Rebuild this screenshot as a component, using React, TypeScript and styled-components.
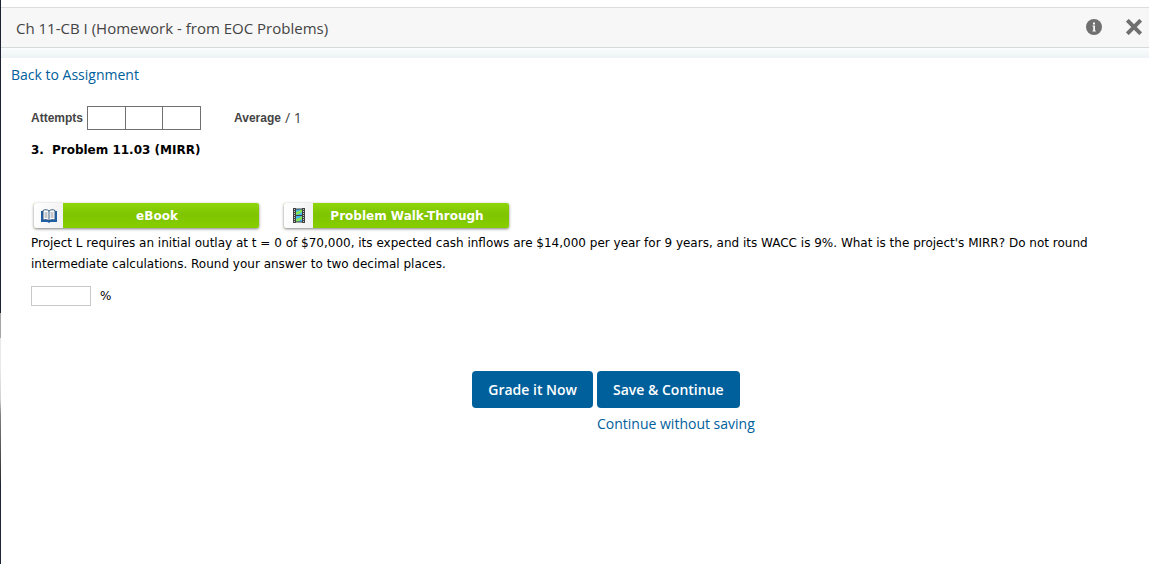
import React from "react";
import styled, { createGlobalStyle } from "styled-components";

const openSans = `"Open Sans", "Noto Sans", sans-serif`;
const verdana = `Verdana, "DejaVu Sans", sans-serif`;
const helvetica = `"Liberation Sans", Helvetica, Arial, sans-serif`;

const GlobalStyle = createGlobalStyle`
  *, *::before, *::after { box-sizing: border-box; }
  body { margin: 0; background: #fff; color: #000; font-family: ${openSans}; font-size: 14px; }
`;

const Shell = styled.div`
  display: flex;
  min-height: 100vh;
`;

const Edge = styled.div`
  flex: 0 0 1px;
  background: linear-gradient(#1d2130 0 313px, #a5a5a5 313px 338px, #e8e8e8 338px 370px, #d0d0d0 400px, #808080 415px, #303030 480px, #1d2536 484px);
`;

const Page = styled.div`
  flex: 1;
  min-width: 0;
  padding-top: 7px;
`;

const Header = styled.header`
  display: flex;
  align-items: center;
  justify-content: space-between;
  height: 41px;
  padding: 0 7px 0 15px;
  background: #f7f7f7;
  border-top: 1px solid #dcdcdc;
  border-bottom: 1px solid #d5dadb;
`;

const Title = styled.h1`
  margin: 0;
  font-size: 15px;
  font-weight: 400;
  line-height: 20px;
  color: #444;
`;

const HeaderActions = styled.div`
  display: flex;
  align-items: center;
  gap: 24px;
  padding-bottom: 1px;
`;

const IconButton = styled.button`
  display: block;
  padding: 0;
  border: 0;
  background: none;
  cursor: pointer;
  svg { display: block; }
`;

const HeaderShade = styled.div`
  height: 10px;
  background: linear-gradient(#fafdfe, #edf3f5);
`;

const Link = styled.a`
  color: #00609c;
  font-size: 14px;
  line-height: 20px;
  text-decoration: none;
`;

const BackRow = styled.nav`
  display: flex;
  padding: 7px 10px 0;
`;

const Main = styled.main`
  padding: 21px 30px 0;
  font-family: ${verdana};
  font-size: 12px;
`;

const Score = styled.div`
  display: flex;
  align-items: center;
  color: #444;
`;

const ScoreLabel = styled.span`
  font-family: ${helvetica};
  font-size: 12px;
  font-weight: 700;
`;

const ScoreValue = styled.span`
  margin-left: 4px;
  font-family: ${openSans};
  font-size: 14px;
  line-height: 20px;
`;

const Attempts = styled.table`
  width: 114px;
  margin: 0 33px 0 4px;
  table-layout: fixed;
  border-collapse: collapse;
  td { height: 23px; padding: 0; border: 1px solid #707070; }
`;

const ProblemTitle = styled.h2`
  display: flex;
  gap: 8px;
  margin: 12px 0 0;
  font-size: 12px;
  font-weight: 700;
  line-height: 16px;
`;

const Resources = styled.div`
  display: flex;
  gap: 25px;
  margin: 45px 0 5px;
  padding-left: 3px;
`;

const ResourceButton = styled.button`
  display: flex;
  width: 225px;
  height: 25px;
  padding: 0;
  overflow: hidden;
  border: 0;
  border-radius: 2px;
  background: linear-gradient(#8fd60c, #7fc400 45%, #86ce00);
  box-shadow: 0 1px 3px rgba(0, 0, 0, 0.5);
  color: #fff;
  font-family: ${verdana};
  font-size: 12px;
  font-weight: 700;
  line-height: 27px;
  cursor: pointer;
`;

const ResourceIcon = styled.span`
  display: flex;
  align-items: center;
  justify-content: center;
  width: 29px;
  height: 25px;
  background: linear-gradient(100deg, #fff, #f1f1f1);
`;

const ResourceLabel = styled.span`
  flex: 1;
  padding-right: 8px;
  text-align: center;
`;

const Question = styled.p`
  margin: 0;
  line-height: 21px;
`;

const Answer = styled.label`
  display: flex;
  align-items: center;
  gap: 9px;
  margin-top: 11px;
`;

const AnswerInput = styled.input`
  width: 60px;
  height: 20px;
  padding: 0 4px;
  border: 1px solid #c8c8c8;
  border-radius: 0;
  background: #fff;
  font: inherit;
`;

const Submit = styled.div`
  display: grid;
  grid-template-columns: 1fr 1fr;
  gap: 6px 4px;
  padding: 65px 0 20px 40px;
  justify-items: start;
`;

const SubmitButton = styled.button<{ $end?: boolean }>`
  height: 37px;
  padding: 0 16px;
  border: 0;
  border-radius: 4px;
  background: #00609c;
  color: #fff;
  font-family: ${openSans};
  font-size: 14px;
  font-weight: 600;
  justify-self: ${(p) => (p.$end ? "end" : "start")};
  cursor: pointer;
`;

const SkipLink = styled(Link)`
  grid-column: 2;
  font-family: ${openSans};
`;

const InfoIcon = () => (
  <svg width="16" height="16" viewBox="0 0 16 16" aria-hidden="true">
    <circle cx="8" cy="8" r="8" fill="#707070" />
    <path d="M7 3.500h2v2H7zM6.500 6.500H9v5h.8v1H6.500v-1h.7v-4h-.7z" fill="#f7f7f7" />
  </svg>
);

const CloseIcon = () => (
  <svg width="16" height="16" viewBox="0 0 16 16" aria-hidden="true">
    <path d="M2.700 2.700l10.600 10.600M13.300 2.700l-10.600 10.600" stroke="#707070" strokeWidth="4" strokeLinecap="square" strokeLinejoin="round" />
  </svg>
);

const BookIcon = () => (
  <svg width="16" height="14" viewBox="0 0 16 14" aria-hidden="true">
    <path d="M0 2h2v9h12V2h2v11H9.500L8 14l-1.500-1H0z" fill="#1d5fa8" />
    <path d="M2 1.500C4 .3 6.500.5 8 2c1.500-1.500 4-1.700 6-.5v9.500c-2-.8-4.500-.6-6 .8-1.500-1.400-4-1.600-6-.8z" fill="#fff" stroke="#35597f" strokeWidth="1" />
    <path d="M8 2v10" stroke="#35597f" />
    <path d="M3.500 4h3M3.500 6h3M3.500 8h3M9.500 4h3M9.500 6h3M9.500 8h3" stroke="#8d9297" strokeWidth="1" />
  </svg>
);

const FilmIcon = () => (
  <svg width="12" height="15" viewBox="0 0 12 15" aria-hidden="true">
    <path d="M0 0h3v15H0zM9 0h3v15H9z" fill="#404040" />
    <path d="M3 1h6v6H3zM3 8h6v6H3z" fill="#45b4ee" />
    <path d="M3 4l3-1 3-2v3L6 6 3 7zM3 11l3-1 3-2v3l-3 2-3 1z" fill="#86e550" />
    <path d="M3 1h6M3 7.500h6M3 14h6" stroke="#404040" />
    <path d="M1.500 1v13M10.500 1v13" stroke="#c8c8c8" strokeDasharray="1 1" />
  </svg>
);

export default function App() {
  return (
    <>
      <GlobalStyle />
      <Shell>
        <Edge />
        <Page>
          <Header>
            <Title>Ch 11-CB I (Homework - from EOC Problems)</Title>
            <HeaderActions>
              <IconButton type="button" aria-label="Information"><InfoIcon /></IconButton>
              <IconButton type="button" aria-label="Close"><CloseIcon /></IconButton>
            </HeaderActions>
          </Header>
          <HeaderShade />
          <BackRow>
            <Link href="#assignment">Back to Assignment</Link>
          </BackRow>
          <Main>
            <Score>
              <ScoreLabel id="attempts-label">Attempts</ScoreLabel>
              <Attempts aria-labelledby="attempts-label">
                <tbody>
                  <tr><td /><td /><td /></tr>
                </tbody>
              </Attempts>
              <ScoreLabel>Average</ScoreLabel>
              <ScoreValue>/ 1</ScoreValue>
            </Score>
            <ProblemTitle>
              <span>3.</span>
              <span>Problem 11.03 (MIRR)</span>
            </ProblemTitle>
            <Resources>
              <ResourceButton type="button">
                <ResourceIcon><BookIcon /></ResourceIcon>
                <ResourceLabel>eBook</ResourceLabel>
              </ResourceButton>
              <ResourceButton type="button">
                <ResourceIcon><FilmIcon /></ResourceIcon>
                <ResourceLabel>Problem Walk-Through</ResourceLabel>
              </ResourceButton>
            </Resources>
            <Question>
              Project L requires an initial outlay at t = 0 of $70,000, its expected cash inflows are $14,000 per year for 9 years, and its WACC is 9%. What is the project's MIRR? Do not round intermediate calculations. Round your answer to two decimal places.
            </Question>
            <Answer>
              <AnswerInput type="text" aria-label="MIRR in percent" />
              <span>%</span>
            </Answer>
            <Submit>
              <SubmitButton type="button" $end>Grade it Now</SubmitButton>
              <SubmitButton type="button">Save &amp; Continue</SubmitButton>
              <SkipLink href="#next">Continue without saving</SkipLink>
            </Submit>
          </Main>
        </Page>
      </Shell>
    </>
  );
}
